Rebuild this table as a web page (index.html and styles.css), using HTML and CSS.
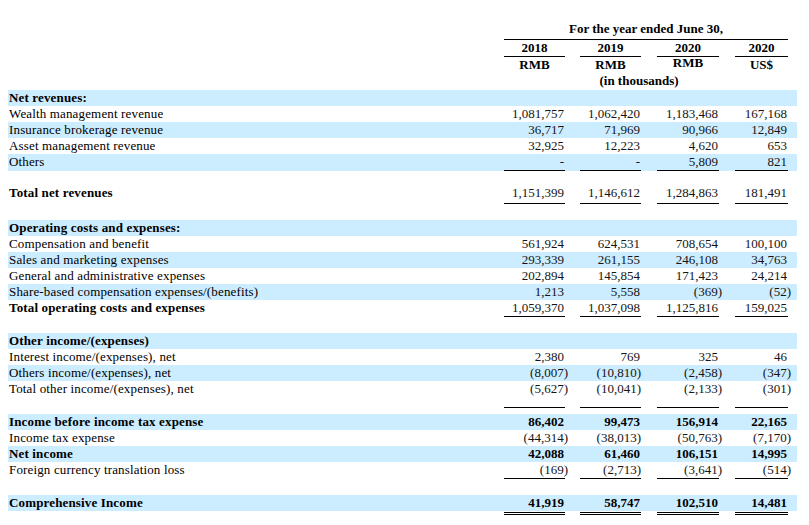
FILE: index.html
```html
<!DOCTYPE html>
<html>
<head>
<meta charset="utf-8">
<title>Statement of operations</title>
<link rel="stylesheet" href="styles.css">
</head>
<body>
<div class="stmt">
  <div class="row head1"><div class="span4 b">For the year ended June 30,</div></div>
  <div class="row head2">
    <div class="c1 ctr b ul">2018</div><div class="c2 ctr b ul">2019</div><div class="c3 ctr b ul">2020</div><div class="c4 ctr b ul">2020</div>
  </div>
  <div class="row head3">
    <div class="c1 ctr b">RMB</div><div class="c2 ctr b">RMB</div><div class="c3 ctr b up">RMB</div><div class="c4 ctr b">US$</div>
  </div>
  <div class="row head4"><div class="span4 ctr b thou">(in thousands)</div></div>

  <div class="row band"><div class="lbl b">Net revenues:</div></div>
  <div class="row"><div class="lbl">Wealth management revenue</div><div class="c1 v">1,081,757</div><div class="c2 v">1,062,420</div><div class="c3 v">1,183,468</div><div class="c4 v">167,168</div></div>
  <div class="row band"><div class="lbl">Insurance brokerage revenue</div><div class="c1 v">36,717</div><div class="c2 v">71,969</div><div class="c3 v">90,966</div><div class="c4 v">12,849</div></div>
  <div class="row"><div class="lbl">Asset management revenue</div><div class="c1 v">32,925</div><div class="c2 v">12,223</div><div class="c3 v">4,620</div><div class="c4 v">653</div></div>
  <div class="row band line"><div class="lbl">Others</div><div class="c1 v">-</div><div class="c2 v">-</div><div class="c3 v">5,809</div><div class="c4 v">821</div></div>
  <div class="gap g14"></div>
  <div class="row line pad2"><div class="lbl b">Total net revenues</div><div class="c1 v">1,151,399</div><div class="c2 v">1,146,612</div><div class="c3 v">1,284,863</div><div class="c4 v">181,491</div></div>
  <div class="gap g16"></div>

  <div class="row band"><div class="lbl b">Operating costs and expenses:</div></div>
  <div class="row"><div class="lbl">Compensation and benefit</div><div class="c1 v">561,924</div><div class="c2 v">624,531</div><div class="c3 v">708,654</div><div class="c4 v">100,100</div></div>
  <div class="row band"><div class="lbl">Sales and marketing expenses</div><div class="c1 v">293,339</div><div class="c2 v">261,155</div><div class="c3 v">246,108</div><div class="c4 v">34,763</div></div>
  <div class="row"><div class="lbl">General and administrative expenses</div><div class="c1 v">202,894</div><div class="c2 v">145,854</div><div class="c3 v">171,423</div><div class="c4 v">24,214</div></div>
  <div class="row band"><div class="lbl">Share-based compensation expenses/(benefits)</div><div class="c1 v">1,213</div><div class="c2 v">5,558</div><div class="c3 v"><span class="neg">(369)</span></div><div class="c4 v"><span class="neg">(52)</span></div></div>
  <div class="row line"><div class="lbl b">Total operating costs and expenses</div><div class="c1 v">1,059,370</div><div class="c2 v">1,037,098</div><div class="c3 v">1,125,816</div><div class="c4 v">159,025</div></div>
  <div class="gap g16"></div>

  <div class="row band"><div class="lbl b">Other income/(expenses)</div></div>
  <div class="row"><div class="lbl">Interest income/(expenses), net</div><div class="c1 v">2,380</div><div class="c2 v">769</div><div class="c3 v">325</div><div class="c4 v">46</div></div>
  <div class="row band"><div class="lbl">Others income/(expenses), net</div><div class="c1 v"><span class="neg">(8,007)</span></div><div class="c2 v"><span class="neg">(10,810)</span></div><div class="c3 v"><span class="neg">(2,458)</span></div><div class="c4 v"><span class="neg">(347)</span></div></div>
  <div class="row line pad10"><div class="lbl">Total other income/(expenses), net</div><div class="c1 v"><span class="neg">(5,627)</span></div><div class="c2 v"><span class="neg">(10,041)</span></div><div class="c3 v"><span class="neg">(2,133)</span></div><div class="c4 v"><span class="neg">(301)</span></div></div>
  <div class="gap g6"></div>

  <div class="row band"><div class="lbl b">Income before income tax expense</div><div class="c1 v b">86,402</div><div class="c2 v b">99,473</div><div class="c3 v b">156,914</div><div class="c4 v b">22,165</div></div>
  <div class="row"><div class="lbl">Income tax expense</div><div class="c1 v"><span class="neg">(44,314)</span></div><div class="c2 v"><span class="neg">(38,013)</span></div><div class="c3 v"><span class="neg">(50,763)</span></div><div class="c4 v"><span class="neg">(7,170)</span></div></div>
  <div class="row band"><div class="lbl b">Net income</div><div class="c1 v b">42,088</div><div class="c2 v b">61,460</div><div class="c3 v b">106,151</div><div class="c4 v b">14,995</div></div>
  <div class="row line"><div class="lbl">Foreign currency translation loss</div><div class="c1 v"><span class="neg">(169)</span></div><div class="c2 v"><span class="neg">(2,713)</span></div><div class="c3 v"><span class="neg">(3,641)</span></div><div class="c4 v"><span class="neg">(514)</span></div></div>
  <div class="gap g16"></div>

  <div class="row band dbl"><div class="lbl b">Comprehensive Income</div><div class="c1 v b">41,919</div><div class="c2 v b">58,747</div><div class="c3 v b">102,510</div><div class="c4 v b">14,481</div></div>
</div>
</body>
</html>
```
FILE: styles.css
```css
html, body {
  background: #ffffff;
}
body {
  margin: 8px;
  font-family: "Liberation Serif", "Times New Roman", serif;
  font-size: 13px;
  color: #000;
}
.stmt {
  width: 789px;
  padding-top: 13px;
}
.row {
  display: grid;
  grid-template-columns: 496px 61px 76px 78px 69px 9px;
  line-height: 16px;
  min-height: 16px;
  align-items: start;
}
.band {
  background: #ccecff;
}
.lbl {
  grid-column: 1;
  padding-left: 1px;
  white-space: nowrap;
  letter-spacing: 0.15px;
}
.c1 { grid-column: 2; }
.c2 { grid-column: 3; margin-left: 15px; }
.c3 { grid-column: 4; margin-left: 16px; }
.c4 { grid-column: 5; margin-left: 16px; }
.span4 {
  grid-column: 2 / 6;
  text-align: center;
}
.b { font-weight: bold; }
.ctr { text-align: center; }
.up { margin-top: -2px; }
.v {
  text-align: right;
  padding-right: 1px;
  color: #141414;
  white-space: nowrap;
}
.v.b { color: #000; }
.neg { margin-right: -4px; }
.c2 .neg { margin-right: -1px; }

.head1 .span4 {
  padding-bottom: 2px;
  border-bottom: 1px solid #000;
}
.head2 .ul {
  border-bottom: 1px solid #000;
}
.head4 {
  min-height: 17px;
}
.thou {
  padding-right: 14px;
}

.line .v {
  border-bottom: 1px solid #000;
}
.pad2 .v { padding-bottom: 2px; }
.pad10 .v { padding-bottom: 10px; }
.dbl .v {
  padding-bottom: 1px;
  border-bottom: 3px double #000;
}
.dbl { background: linear-gradient(#ccecff, #ccecff) top / 100% 16px no-repeat; }

.gap { height: 16px; }
.g14 { height: 14px; }
.g16 { height: 16px; }
.g6 { height: 6px; }
```
